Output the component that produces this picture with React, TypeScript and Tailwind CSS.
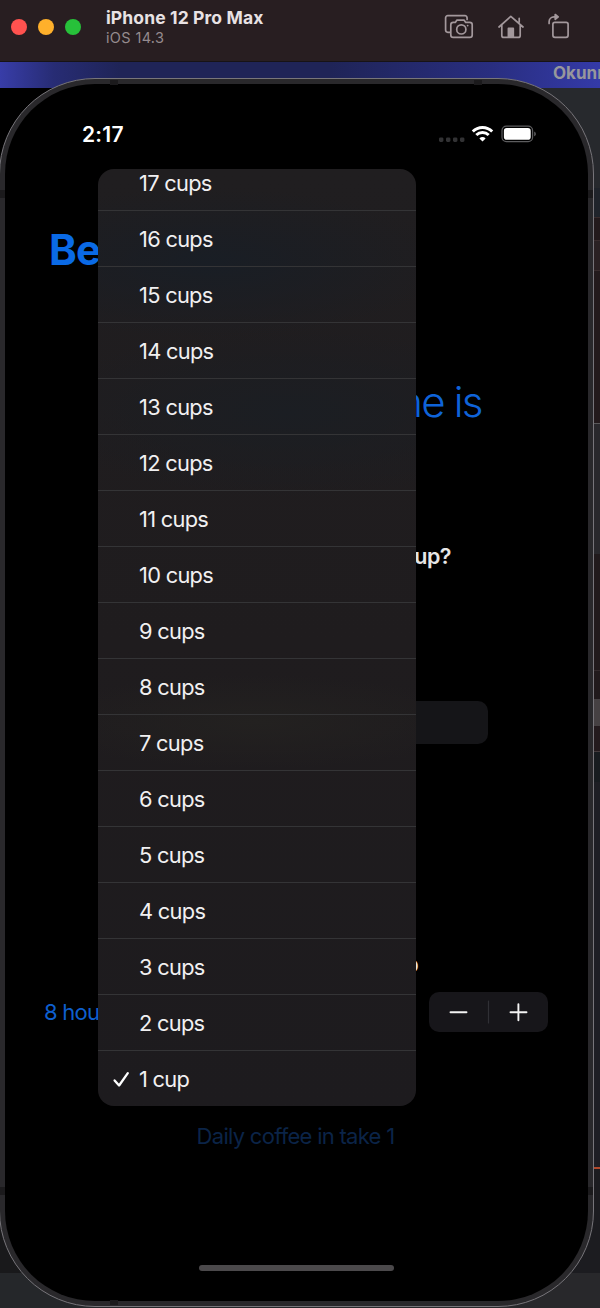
import React from "react";

const cups = Array.from({ length: 17 }, (_, i) => 17 - i);

function Toolbar() {
  return (
    <header className="relative z-10 flex h-[62px] shrink-0 border-b border-[#171316] bg-[#281e21]">
      <div className="flex gap-[11px] pl-[11px] pt-[19px]">
        <span className="h-4 w-4 rounded-full bg-[#ff524f]" />
        <span className="h-4 w-4 rounded-full bg-[#ffb02b]" />
        <span className="h-4 w-4 rounded-full bg-[#27c13a]" />
      </div>
      <div className="flex flex-col pl-[25px] pt-[7px]">
        <h1 className="text-[17.5px] font-bold leading-[22px] tracking-[0.12px] text-[#e8e2e4]">iPhone 12 Pro Max</h1>
        <p className="text-[14.5px] leading-[17px] tracking-[0.35px] text-[#958b8e]">iOS 14.3</p>
      </div>
      <svg className="ml-auto h-[61px] w-[170px]" viewBox="430 0 170 61" fill="none" stroke="#a3989c" strokeWidth="1.7" strokeLinejoin="round" strokeLinecap="round">
        <path d="M450 32.3h-2.2a2.2 2.2 0 0 1-2.2-2.2V17.9a2.2 2.2 0 0 1 2.2-2.2h17.1a2.2 2.2 0 0 1 2.2 2.2v1.6" />
        <path d="M453.2 22.4h2.1l1.5-2.2h7.4l1.5 2.2h4.1a2.4 2.4 0 0 1 2.4 2.4v10.1a2.4 2.4 0 0 1-2.4 2.4h-16.6a2.4 2.4 0 0 1-2.4-2.4V24.8a2.4 2.4 0 0 1 2.4-2.4z" />
        <circle cx="461.3" cy="29.4" r="4.6" />
        <path d="M467.6 25.6h.1" />
        <path d="M499 27l11.8-10.7L523 27M501.8 25v10.4a2 2 0 0 0 2 2h14.4a2 2 0 0 0 2-2V25M519.2 22v-3.6" />
        <path d="M508.4 37v-8.6h4.9V37z" fill="#a3989c" />
        <rect x="552.9" y="22.3" width="15.2" height="15" rx="2" />
        <path d="M549.1 23.4v-1.6a4.9 4.9 0 0 1 4.9-4.9h2.6" />
        <path d="M555.2 14.5l3 2.4-3 2.4z" fill="#a3989c" />
      </svg>
    </header>
  );
}

function Desktop() {
  return (
    <div className="absolute inset-0 flex flex-col pt-[62px]">
      <div className="flex h-[26px] shrink-0 justify-end overflow-hidden bg-[linear-gradient(to_right,#383da8,#272c74_9%,#1f2457_20%,#1f2457_55%,#292e80_82%,#343aa8)]">
        <span className="w-[47px] whitespace-nowrap text-[17px] font-bold leading-[22px] text-[#97979c]">Okunnu</span>
      </div>
      <div className="flex grow">
        <div className="flex w-[300px] flex-col justify-between bg-black">
          <div />
          <div className="flex h-[120px] flex-col justify-end bg-[#19191b]">
            <div className="h-[35px] bg-[#25272a]" />
          </div>
        </div>
        <div className="flex w-[300px] flex-col">
          <div className="h-[100px] bg-[#27292d]" />
          <div className="h-[29px] bg-[#20242b]" />
          <div className="h-[24px] border-y border-[#392c2d] bg-[#231a1c]" />
          <div className="h-[30px] border-b border-[#392c2d] bg-[#2a2123]" />
          <div className="h-[153px] border-b border-[#59585a] bg-[#231a1c]" />
          <div className="h-[130px] bg-[#29282c]" />
          <div className="h-[117px] border-b border-[#332a2c] bg-[#211a1c]" />
          <div className="h-[28px] bg-[#211a1c]" />
          <div className="h-[27px] bg-[#464143]" />
          <div className="h-[26px] border-b border-[#443b3d] bg-[#241b1e]" />
          <div className="h-[30px] bg-[#181c20]" />
          <div className="h-[387px] border-b-2 border-[#b2492c] bg-[#1e1e24]" />
          <div className="h-[104px] bg-[#1c1c20]" />
          <div className="grow bg-[#28282b]" />
        </div>
      </div>
    </div>
  );
}

function StatusBar() {
  return (
    <div className="flex h-[30px] shrink-0 items-center justify-between pl-[77px] pr-[50px]">
      <span className="pt-px text-[21px] font-semibold leading-[30px] tracking-[0.25px] text-white">2:17</span>
      <svg className="h-[30px] w-[100px]" viewBox="438 119 100 30" fill="none">
        <g fill="#323234">
          <rect x="439" y="137.4" width="4.4" height="4.6" rx="1.4" />
          <rect x="446" y="137.4" width="4.4" height="4.6" rx="1.4" />
          <rect x="453" y="137.4" width="4.4" height="4.6" rx="1.4" />
          <rect x="460" y="137.4" width="4.4" height="4.6" rx="1.4" />
        </g>
        <g stroke="#fff" strokeWidth="2.9">
          <path d="M472.8 131.5a13.6 13.6 0 0 1 19.4 0" />
          <path d="M476.3 135.1a8.7 8.7 0 0 1 12.4 0" />
        </g>
        <path d="M482.5 141.6l-3.1-3.2a4.4 4.4 0 0 1 6.2 0z" fill="#fff" />
        <rect x="502" y="126.2" width="30.6" height="15.4" rx="4.4" stroke="#5c5c5e" strokeWidth="1.2" />
        <rect x="503.9" y="128.1" width="26.8" height="11.6" rx="2.8" fill="#fff" />
        <path d="M534.2 131.5c2.2.8 2.2 4 0 4.8z" fill="#5c5c5e" />
      </svg>
    </div>
  );
}

function Stepper() {
  return (
    <div className="flex h-10 w-[119px] items-center rounded-[10px] bg-[#17161a]">
      <svg className="h-10 w-[119px]" viewBox="0 0 119 40" stroke="#f4f4f4" strokeWidth="1.9" strokeLinecap="round">
        <path d="M21.5 20.3h16M81.5 20.3h16M89.4 12.3v16" />
        <path d="M59.5 9v22" stroke="#303035" strokeWidth="1.2" />
      </svg>
    </div>
  );
}

function CupMenu() {
  return (
    <ul className="absolute left-[98px] top-[169px] flex h-[937px] w-[318px] flex-col justify-end overflow-hidden rounded-[16px] bg-linear-to-b from-[#201e20] via-[#1f1c1e] to-[#1d1b1e]">
      <div className="absolute inset-0 bg-[radial-gradient(ellipse_75%_8%_at_35%_10%,#191e25,transparent),radial-gradient(ellipse_80%_9%_at_60%_26%,#1b1e23,transparent),radial-gradient(ellipse_70%_5%_at_50%_59%,#232120,transparent)]" />
      {cups.map((n) => (
        <li
          key={n}
          className="relative flex h-14 shrink-0 items-center border-b border-[#343436] pt-[2px] text-[21.8px] tracking-[-0.7px] text-[#f1f0f1] last:-mb-px last:border-transparent"
        >
          <span className="flex w-[41px] pl-[14px]">
            {n === 1 && (
              <svg className="h-[18px] w-[18px]" viewBox="0 0 18 18" fill="none" stroke="#fff" strokeWidth="2.3" strokeLinecap="round" strokeLinejoin="round">
                <path d="M2.6 9.4l4.5 5.1L15.8 2.2" />
              </svg>
            )}
          </span>
          {n} {n === 1 ? "cup" : "cups"}
        </li>
      ))}
    </ul>
  );
}

function AntennaBands() {
  return (
    <>
      <span className="absolute left-[110px] top-px h-[5px] w-2 bg-[#1b1a1c]" />
      <span className="absolute right-[111px] top-px h-[5px] w-2 bg-[#1b1a1c]" />
      <span className="absolute bottom-px left-[110px] h-[5px] w-2 bg-[#1b1a1c]" />
      <span className="absolute left-0 top-[111px] h-2 w-[5px] bg-[#1b1a1c]" />
      <span className="absolute right-0 top-[111px] h-2 w-[5px] bg-[#1b1a1c]" />
      <span className="absolute bottom-[111px] left-0 h-2 w-[5px] bg-[#1b1a1c]" />
      <span className="absolute bottom-[111px] right-0 h-2 w-[5px] bg-[#1b1a1c]" />
    </>
  );
}

export default function App() {
  return (
    <div className="relative flex h-[1308px] w-[600px] flex-col overflow-hidden bg-black font-['Inter',sans-serif]">
      <Desktop />
      <Toolbar />
      <div className="relative -ml-px mt-4 flex h-[1229px] w-[595px] shrink-0 rounded-[96px] border-[1.5px] border-[#77757a] bg-[#29282b] p-[5px]">
        <AntennaBands />
        <main className="flex grow flex-col overflow-hidden whitespace-nowrap rounded-[90px] bg-black pt-[35px]">
          <StatusBar />
          <h2 className="mt-[71px] pl-[44px] text-[42px] font-bold leading-[60px] tracking-[-0.8px] text-[#0a6ae6]">BetterRest</h2>
          <p className="mt-[92px] text-center text-[42px] font-light leading-[60px] tracking-[-1.8px] text-[#0f63d8]">Your ideal bedtime is</p>
          <p className="mt-[109px] text-center text-[21.5px] font-semibold leading-[30px] tracking-[-0.5px] text-[#e6e6e6]">When do you want to wake up?</p>
          <div className="mt-[130px] h-[43px] w-[382px] self-center rounded-[10px] bg-[#151518]" />
          <p className="mt-[205px] text-center text-[21.5px] font-semibold leading-[30px] tracking-[-0.38px] text-[#e6e6e6]">Desired amount of sleep</p>
          <div className="mt-[13px] flex items-center justify-between pl-[39px] pr-[40px]">
            <span className="text-[22px] tracking-[-0.75px] text-[#0e5fce]">8 hours</span>
            <Stepper />
          </div>
          <p className="mt-[89px] pr-[2px] text-center text-[22px] leading-[30px] tracking-[-0.72px] text-[#0b2448]">Daily coffee in take 1</p>
          <div className="mb-[30px] mt-auto h-[6px] w-[195px] self-center rounded-full bg-[#4b494b]" />
        </main>
      </div>
      <CupMenu />
    </div>
  );
}
